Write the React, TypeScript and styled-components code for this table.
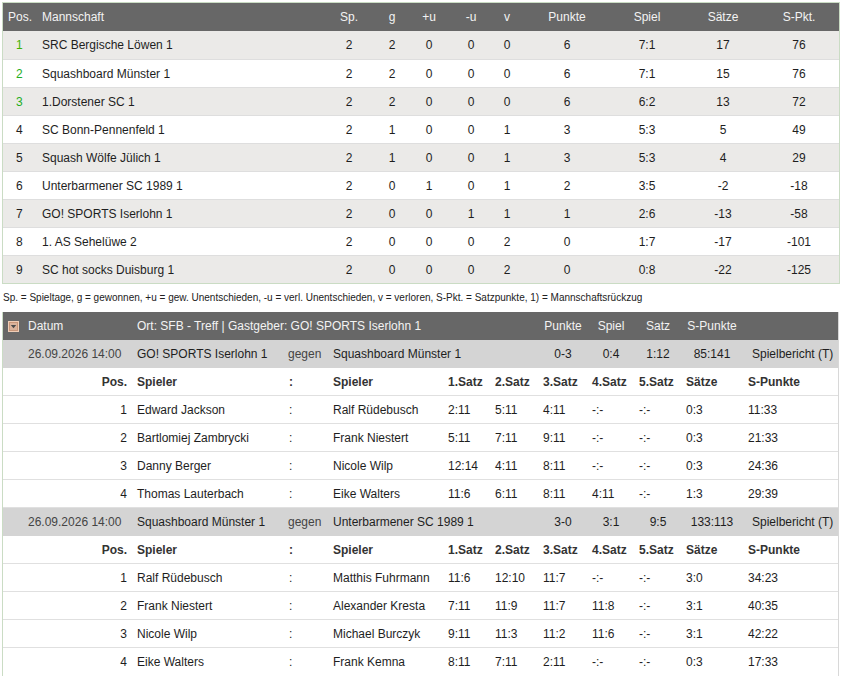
import React from "react";
import styled, { createGlobalStyle } from "styled-components";

const GlobalStyle = createGlobalStyle`
  html, body { margin: 0; padding: 0; background: #ffffff; }
  body {
    font-family: "Liberation Sans", Arial, Helvetica, sans-serif;
    font-size: 12px;
    color: #222222;
  }
  * { box-sizing: border-box; }
`;

type Align = "left" | "center" | "right";

const Page = styled.div`
  width: 842px;
  padding: 2px 2px 0 2px;
`;

/* ---------- Standings ---------- */

const standingsCols = "34px 291px 42px 44px 30px 54px 18px 102px 58px 94px 58px 11px";

const Standings = styled.div`
  width: 838px;
  border: 1px solid #cadcc4;
`;

const StandingsRow = styled.div<{ $head?: boolean; $odd?: boolean }>`
  display: grid;
  grid-template-columns: ${standingsCols};
  align-items: center;
  height: 28px;
  background: ${(p) => (p.$head ? "#676767" : p.$odd ? "#ebeae8" : "#ffffff")};
  color: ${(p) => (p.$head ? "#f3f3f3" : "#1e1e1e")};
  border-top: ${(p) => (p.$head ? "none" : "1px solid #dedede")};
  &:nth-child(2) { border-top: none; }
`;

const SCell = styled.div<{ $align?: Align; $pad?: number }>`
  text-align: ${(p) => p.$align ?? "center"};
  padding-left: ${(p) => p.$pad ?? 0}px;
  white-space: nowrap;
  overflow: visible;
`;

const PosNum = styled.span<{ $color?: string }>`
  color: ${(p) => p.$color ?? "#1e1e1e"};
`;

const Legend = styled.div`
  font-size: 10px;
  color: #222222;
  height: 28px;
  line-height: 27px;
  padding-left: 1px;
  white-space: nowrap;
`;

/* ---------- Matches ---------- */

const matchCols = "134px 151px 45px 207px 46px 50px 44px 64px 94px";
const playerCols = "134px 152px 44px 115px 47px 48px 49px 47px 47px 62px 90px";

const Matches = styled.div`
  width: 837px;
  border-left: 1px solid #cadcc4;
  border-right: 1px solid #d8d8d8;
`;

const MatchHead = styled.div`
  display: grid;
  grid-template-columns: ${matchCols};
  align-items: center;
  height: 28px;
  background: #676767;
  color: #f3f3f3;
`;

const MatchRow = styled.div`
  display: grid;
  grid-template-columns: ${matchCols};
  align-items: center;
  height: 28px;
  background: #d4d4d4;
  color: #1e1e1e;
`;

const PlayerRow = styled.div<{ $head?: boolean }>`
  display: grid;
  grid-template-columns: ${playerCols};
  align-items: center;
  height: 28px;
  background: #ffffff;
  border-bottom: 1px solid #e0e0e0;
  font-weight: ${(p) => (p.$head ? "bold" : "normal")};
  color: ${(p) => (p.$head ? "#333333" : "#1e1e1e")};
  &:last-child { border-bottom: none; }
`;

const MCell = styled.div<{ $align?: Align; $pl?: number; $pr?: number; $span?: number; $muted?: boolean }>`
  text-align: ${(p) => p.$align ?? "left"};
  padding-left: ${(p) => p.$pl ?? 0}px;
  padding-right: ${(p) => p.$pr ?? 0}px;
  grid-column: ${(p) => (p.$span ? `span ${p.$span}` : "auto")};
  color: ${(p) => (p.$muted ? "#444444" : "inherit")};
  white-space: nowrap;
`;

const DatumCell = styled.div`
  display: flex;
  align-items: center;
  gap: 9px;
  padding-left: 5px;
`;

const ToggleIcon = () => (
  <svg width="11" height="11" viewBox="0 0 11 11">
    <rect x="0.5" y="0.5" width="10" height="10" fill="#c9977a" stroke="#efcdb6" />
    <rect x="2" y="2" width="7" height="7" fill="#d9b39c" />
    <path d="M2.8 4 L8.2 4 L5.5 7.2 Z" fill="#4a4a4a" />
  </svg>
);

/* ---------- Data ---------- */

type Team = {
  pos: number;
  name: string;
  sp: number;
  g: number;
  pu: number;
  mu: number;
  v: number;
  pkt: number;
  spiel: string;
  saetze: number;
  spkt: number;
};

const teams: Team[] = [
  { pos: 1, name: "SRC Bergische Löwen 1", sp: 2, g: 2, pu: 0, mu: 0, v: 0, pkt: 6, spiel: "7:1", saetze: 17, spkt: 76 },
  { pos: 2, name: "Squashboard Münster 1", sp: 2, g: 2, pu: 0, mu: 0, v: 0, pkt: 6, spiel: "7:1", saetze: 15, spkt: 76 },
  { pos: 3, name: "1.Dorstener SC 1", sp: 2, g: 2, pu: 0, mu: 0, v: 0, pkt: 6, spiel: "6:2", saetze: 13, spkt: 72 },
  { pos: 4, name: "SC Bonn-Pennenfeld 1", sp: 2, g: 1, pu: 0, mu: 0, v: 1, pkt: 3, spiel: "5:3", saetze: 5, spkt: 49 },
  { pos: 5, name: "Squash Wölfe Jülich 1", sp: 2, g: 1, pu: 0, mu: 0, v: 1, pkt: 3, spiel: "5:3", saetze: 4, spkt: 29 },
  { pos: 6, name: "Unterbarmener SC 1989 1", sp: 2, g: 0, pu: 1, mu: 0, v: 1, pkt: 2, spiel: "3:5", saetze: -2, spkt: -18 },
  { pos: 7, name: "GO! SPORTS Iserlohn 1", sp: 2, g: 0, pu: 0, mu: 1, v: 1, pkt: 1, spiel: "2:6", saetze: -13, spkt: -58 },
  { pos: 8, name: "1. AS Sehelüwe 2", sp: 2, g: 0, pu: 0, mu: 0, v: 2, pkt: 0, spiel: "1:7", saetze: -17, spkt: -101 },
  { pos: 9, name: "SC hot socks Duisburg 1", sp: 2, g: 0, pu: 0, mu: 0, v: 2, pkt: 0, spiel: "0:8", saetze: -22, spkt: -125 },
];

const posColor = (pos: number) => (pos === 1 ? "#3fb300" : pos <= 3 ? "#1fae1f" : undefined);

type Game = {
  pos: number;
  home: string;
  away: string;
  sets: string[];
  saetze: string;
  spunkte: string;
};

type Match = {
  date: string;
  home: string;
  away: string;
  punkte: string;
  spiel: string;
  satz: string;
  spunkte: string;
  games: Game[];
};

const matches: Match[] = [
  {
    date: "26.09.2026 14:00",
    home: "GO! SPORTS Iserlohn 1",
    away: "Squashboard Münster 1",
    punkte: "0-3",
    spiel: "0:4",
    satz: "1:12",
    spunkte: "85:141",
    games: [
      { pos: 1, home: "Edward Jackson", away: "Ralf Rüdebusch", sets: ["2:11", "5:11", "4:11", "-:-", "-:-"], saetze: "0:3", spunkte: "11:33" },
      { pos: 2, home: "Bartlomiej Zambrycki", away: "Frank Niestert", sets: ["5:11", "7:11", "9:11", "-:-", "-:-"], saetze: "0:3", spunkte: "21:33" },
      { pos: 3, home: "Danny Berger", away: "Nicole Wilp", sets: ["12:14", "4:11", "8:11", "-:-", "-:-"], saetze: "0:3", spunkte: "24:36" },
      { pos: 4, home: "Thomas Lauterbach", away: "Eike Walters", sets: ["11:6", "6:11", "8:11", "4:11", "-:-"], saetze: "1:3", spunkte: "29:39" },
    ],
  },
  {
    date: "26.09.2026 14:00",
    home: "Squashboard Münster 1",
    away: "Unterbarmener SC 1989 1",
    punkte: "3-0",
    spiel: "3:1",
    satz: "9:5",
    spunkte: "133:113",
    games: [
      { pos: 1, home: "Ralf Rüdebusch", away: "Matthis Fuhrmann", sets: ["11:6", "12:10", "11:7", "-:-", "-:-"], saetze: "3:0", spunkte: "34:23" },
      { pos: 2, home: "Frank Niestert", away: "Alexander Kresta", sets: ["7:11", "11:9", "11:7", "11:8", "-:-"], saetze: "3:1", spunkte: "40:35" },
      { pos: 3, home: "Nicole Wilp", away: "Michael Burczyk", sets: ["9:11", "11:3", "11:2", "11:6", "-:-"], saetze: "3:1", spunkte: "42:22" },
      { pos: 4, home: "Eike Walters", away: "Frank Kemna", sets: ["8:11", "7:11", "2:11", "-:-", "-:-"], saetze: "0:3", spunkte: "17:33" },
    ],
  },
];

const PlayerBlock: React.FC<{ games: Game[] }> = ({ games }) => (
  <>
    <PlayerRow $head>
      <MCell $align="right" $pr={10}>Pos.</MCell>
      <MCell>Spieler</MCell>
      <MCell>:</MCell>
      <MCell>Spieler</MCell>
      <MCell>1.Satz</MCell>
      <MCell>2.Satz</MCell>
      <MCell>3.Satz</MCell>
      <MCell>4.Satz</MCell>
      <MCell>5.Satz</MCell>
      <MCell>Sätze</MCell>
      <MCell>S-Punkte</MCell>
    </PlayerRow>
    {games.map((g) => (
      <PlayerRow key={g.pos}>
        <MCell $align="right" $pr={10}>{g.pos}</MCell>
        <MCell>{g.home}</MCell>
        <MCell>:</MCell>
        <MCell>{g.away}</MCell>
        {g.sets.map((s, i) => (
          <MCell key={i}>{s}</MCell>
        ))}
        <MCell>{g.saetze}</MCell>
        <MCell>{g.spunkte}</MCell>
      </PlayerRow>
    ))}
  </>
);

export default function App() {
  return (
    <>
      <GlobalStyle />
      <Page>
        <Standings>
          <StandingsRow $head>
            <SCell $align="left" $pad={5}>Pos.</SCell>
            <SCell $align="left" $pad={5}>Mannschaft</SCell>
            <SCell>Sp.</SCell>
            <SCell>g</SCell>
            <SCell>+u</SCell>
            <SCell>-u</SCell>
            <SCell>v</SCell>
            <SCell>Punkte</SCell>
            <SCell>Spiel</SCell>
            <SCell>Sätze</SCell>
            <SCell>S-Pkt.</SCell>
            <SCell />
          </StandingsRow>
          {teams.map((t, i) => (
            <StandingsRow key={t.pos} $odd={i % 2 === 0}>
              <SCell $align="left" $pad={13}>
                <PosNum $color={posColor(t.pos)}>{t.pos}</PosNum>
              </SCell>
              <SCell $align="left" $pad={5}>{t.name}</SCell>
              <SCell>{t.sp}</SCell>
              <SCell>{t.g}</SCell>
              <SCell>{t.pu}</SCell>
              <SCell>{t.mu}</SCell>
              <SCell>{t.v}</SCell>
              <SCell>{t.pkt}</SCell>
              <SCell>{t.spiel}</SCell>
              <SCell>{t.saetze}</SCell>
              <SCell>{t.spkt}</SCell>
              <SCell />
            </StandingsRow>
          ))}
        </Standings>

        <Legend>
          Sp. = Spieltage, g = gewonnen, +u = gew. Unentschieden, -u = verl. Unentschieden, v = verloren, S-Pkt. = Satzpunkte, 1) = Mannschaftsrückzug
        </Legend>

        <Matches>
          <MatchHead>
            <DatumCell>
              <ToggleIcon />
              <span>Datum</span>
            </DatumCell>
            <MCell $span={3}>Ort: SFB - Treff | Gastgeber: GO! SPORTS Iserlohn 1</MCell>
            <MCell $align="center">Punkte</MCell>
            <MCell $align="center">Spiel</MCell>
            <MCell $align="center">Satz</MCell>
            <MCell $align="center">S-Punkte</MCell>
            <MCell />
          </MatchHead>
          {matches.map((m, i) => (
            <React.Fragment key={i}>
              <MatchRow>
                <MCell $pl={25} $muted>{m.date}</MCell>
                <MCell>{m.home}</MCell>
                <MCell $muted>gegen</MCell>
                <MCell>{m.away}</MCell>
                <MCell $align="center">{m.punkte}</MCell>
                <MCell $align="center">{m.spiel}</MCell>
                <MCell $align="center">{m.satz}</MCell>
                <MCell $align="center">{m.spunkte}</MCell>
                <MCell $pl={8}>Spielbericht (T)</MCell>
              </MatchRow>
              <PlayerBlock games={m.games} />
            </React.Fragment>
          ))}
        </Matches>
      </Page>
    </>
  );
}
